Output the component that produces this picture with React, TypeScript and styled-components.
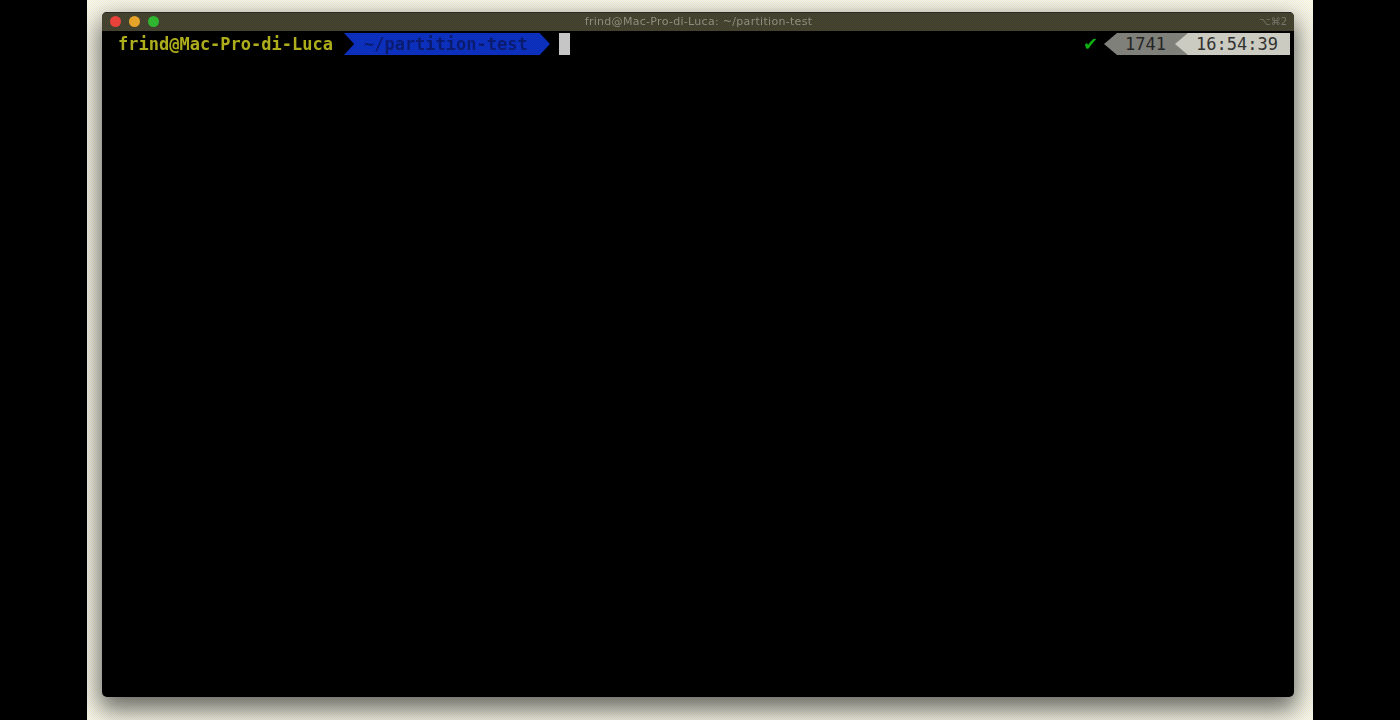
import React from "react";
import styled, { createGlobalStyle } from "styled-components";

const Global = createGlobalStyle`
  html, body { margin: 0; padding: 0; background: #000; }
  #root { width: 1400px; height: 720px; overflow: hidden; }
`;

const Stage = styled.div`
  width: 1400px;
  height: 720px;
  background: #000;
  display: flex;
  justify-content: center;
`;

const Desktop = styled.div`
  width: 1226px;
  height: 720px;
  box-sizing: border-box;
  padding: 12px 19px 23px 15px;
  overflow: hidden;
  background: repeating-conic-gradient(#fbfbd6 0 25%, #f2f2f8 0 50%) 0 0 / 2px 2px;
`;

const Terminal = styled.div`
  width: 100%;
  height: 100%;
  display: flex;
  flex-direction: column;
  background: #000;
  border-radius: 5px;
  overflow: hidden;
  box-shadow: 0 10px 24px 3px rgba(30, 30, 30, 0.66);
`;

const TitleBar = styled.div`
  height: 19px;
  flex: none;
  display: flex;
  align-items: center;
  padding: 0 7px 2px 8px;
  background: repeating-conic-gradient(#4a4828 0 25%, #3c3b34 0 50%) 0 0 / 2px 2px;
  border-top: 1px solid #2b2b26;
  box-sizing: border-box;
`;

const Lights = styled.div`
  flex: 1;
  display: flex;
  gap: 8px;
`;

const Light = styled.span<{ $color: string }>`
  width: 11px;
  height: 11px;
  border-radius: 50%;
  background: ${(p) => p.$color};
  filter: blur(0.5px);
`;

const Title = styled.div`
  flex: none;
  font: 11px "DejaVu Sans", sans-serif;
  letter-spacing: 0.3px;
  color: #8e8d80;
  filter: blur(0.4px);
`;

const Shortcut = styled.div`
  flex: 1;
  text-align: right;
  font: 10px "DejaVu Sans", sans-serif;
  color: #77766c;
  filter: blur(0.4px);
`;

const Screen = styled.div`
  flex: 1;
  padding: 2px 4px 0 16px;
`;

const Prompt = styled.div`
  display: flex;
  align-items: stretch;
  height: 22px;
  font: 17px/22px "DejaVu Sans Mono", monospace;
  filter: blur(0.35px);
`;

const Host = styled.span`
  color: #aeae1c;
  font-weight: 700;
  margin-right: 11px;
`;

const PathSegment = styled.span`
  width: 206px;
  box-sizing: border-box;
  padding-left: 20px;
  background: repeating-conic-gradient(#0a2fc4 0 25%, #1030b4 0 50%) 0 0 / 2px 2px;
  color: #0b1c70;
  font-weight: 700;
  clip-path: polygon(0 0, 95% 0, 100% 50%, 95% 100%, 0 100%, 5% 50%);
  white-space: nowrap;
`;

const Cursor = styled.span`
  width: 11px;
  margin-left: 9px;
  background: #c6c6c6;
`;

const Status = styled.div`
  margin-left: auto;
  display: flex;
  align-items: stretch;
`;

const Check = styled.span`
  color: #0fb012;
  font: 700 18px/22px "DejaVu Sans", sans-serif;
  margin-right: 6px;
`;

const Badge = styled.span<{ $bg: string; $fg: string; $w: number; $overlap?: number }>`
  width: ${(p) => p.$w}px;
  box-sizing: border-box;
  padding-left: 21px;
  margin-left: ${(p) => p.$overlap ?? 0}px;
  background: ${(p) => p.$bg};
  color: ${(p) => p.$fg};
  clip-path: polygon(13px 0, 100% 0, 100% 100%, 13px 100%, 0 50%);
  white-space: nowrap;
`;

export default function App() {
  return (
    <>
      <Global />
      <Stage>
        <Desktop>
          <Terminal>
            <TitleBar>
              <Lights>
                <Light $color="#e8423a" />
                <Light $color="#e6a32a" />
                <Light $color="#2fb52f" />
              </Lights>
              <Title>frind@Mac-Pro-di-Luca: ~/partition-test</Title>
              <Shortcut>⌥⌘2</Shortcut>
            </TitleBar>
            <Screen>
              <Prompt>
                <Host>frind@Mac-Pro-di-Luca</Host>
                <PathSegment>~/partition-test</PathSegment>
                <Cursor />
                <Status>
                  <Check>✔</Check>
                  <Badge $bg="#80807a" $fg="#262626" $w={84}>1741</Badge>
                  <Badge $bg="#cbcbc2" $fg="#333331" $w={115} $overlap={-13}>16:54:39</Badge>
                </Status>
              </Prompt>
            </Screen>
          </Terminal>
        </Desktop>
      </Stage>
    </>
  );
}
